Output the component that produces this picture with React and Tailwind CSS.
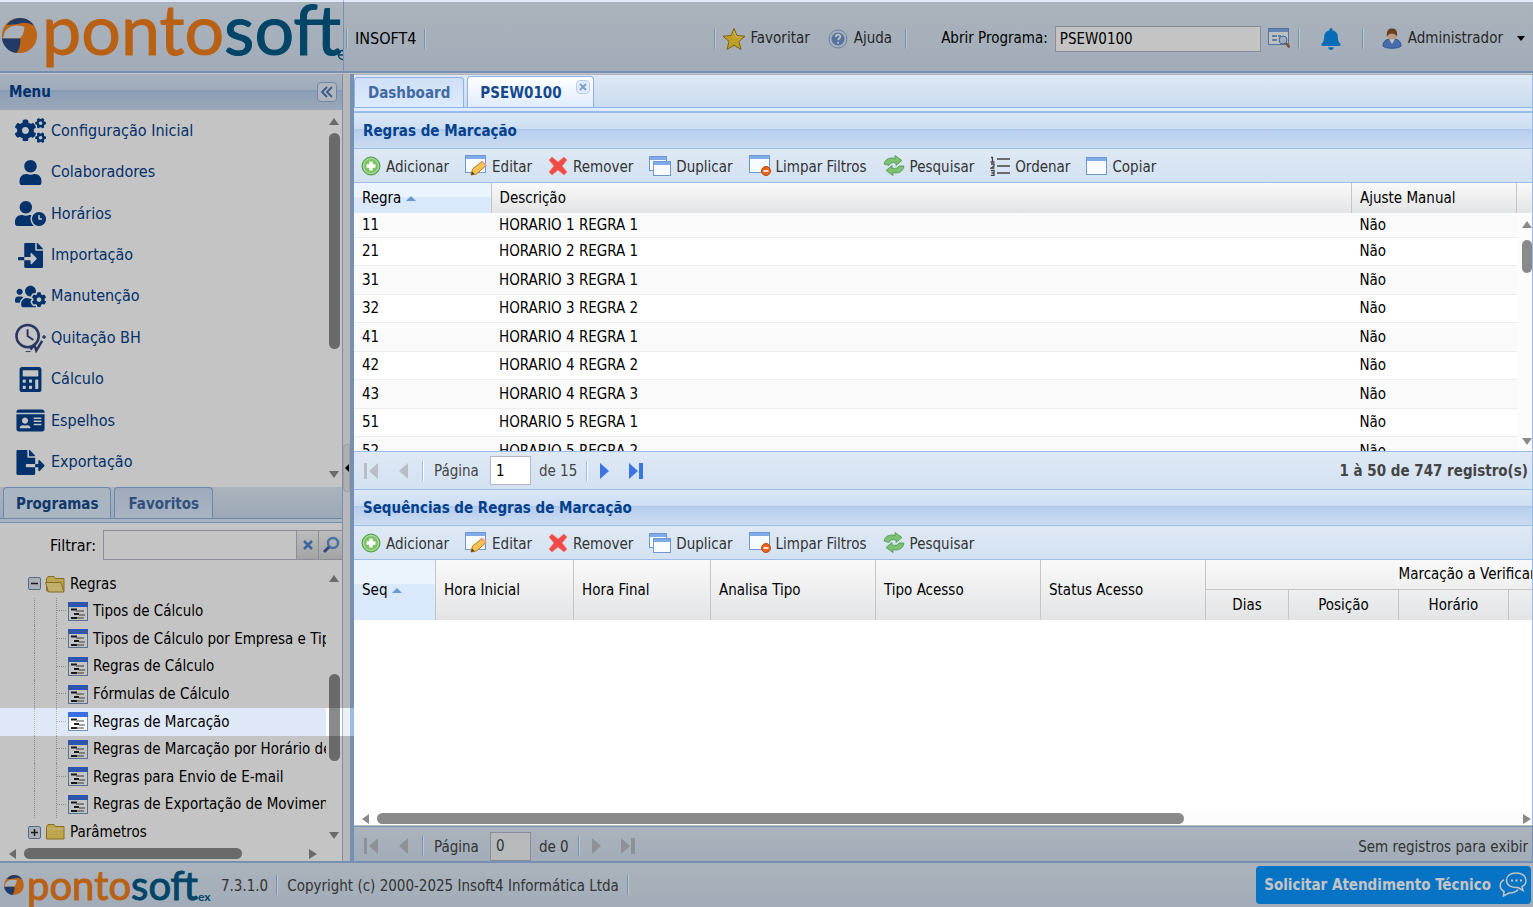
import { FaBell, FaCalculator, FaCogs, FaFileExport, FaFileImport, FaIdCard, FaUser, FaUserClock, FaUsersCog } from 'react-icons/fa'

const menuItems = [
  { label: 'Configuração Inicial', Icon: FaCogs },
  { label: 'Colaboradores', Icon: FaUser },
  { label: 'Horários', Icon: FaUserClock },
  { label: 'Importação', Icon: FaFileImport },
  { label: 'Manutenção', Icon: FaUsersCog },
  { label: 'Quitação BH', Icon: BankClockIcon },
  { label: 'Cálculo', Icon: FaCalculator },
  { label: 'Espelhos', Icon: FaIdCard },
  { label: 'Exportação', Icon: FaFileExport },
]

const programs = [
  'Tipos de Cálculo',
  'Tipos de Cálculo por Empresa e Tipo',
  'Regras de Cálculo',
  'Fórmulas de Cálculo',
  'Regras de Marcação',
  'Regras de Marcação por Horário de Trabalho',
  'Regras para Envio de E-mail',
  'Regras de Exportação de Movimentos',
]

const rules = [
  ['11', 'HORARIO 1 REGRA 1'],
  ['21', 'HORARIO 2 REGRA 1'],
  ['31', 'HORARIO 3 REGRA 1'],
  ['32', 'HORARIO 3 REGRA 2'],
  ['41', 'HORARIO 4 REGRA 1'],
  ['42', 'HORARIO 4 REGRA 2'],
  ['43', 'HORARIO 4 REGRA 3'],
  ['51', 'HORARIO 5 REGRA 1'],
  ['52', 'HORARIO 5 REGRA 2'],
]

const baseActions = [
  { label: 'Adicionar', Icon: AddIcon },
  { label: 'Editar', Icon: EditIcon },
  { label: 'Remover', Icon: RemoveIcon },
  { label: 'Duplicar', Icon: DuplicateIcon },
  { label: 'Limpar Filtros', Icon: ClearIcon },
  { label: 'Pesquisar', Icon: RefreshIcon },
]

const ruleActions = [
  ...baseActions,
  { label: 'Ordenar', Icon: SortIcon },
  { label: 'Copiar', Icon: WindowIcon },
]

/* ---------- icons ---------- */

function BankClockIcon({ className }) {
  return (
    <svg viewBox="0 0 32 32" className={className} fill="none" stroke="#35477f">
      <circle cx="13" cy="14" r="11.5" strokeWidth="2.6" />
      <path d="M13 7v7l6 4" strokeWidth="2" />
      <path d="M16 28l4-5 2 6 6-10" strokeWidth="2.6" />
      <path d="M30 13v4M28 15h4" strokeWidth="1.4" />
      <path d="M11 30h5" strokeWidth="1" />
    </svg>
  )
}

function Frame({ x = 0, y = 0, w = 21, h = 18 }) {
  return (
    <g>
      <rect x={x + 0.5} y={y + 0.5} width={w - 1} height={h - 1} fill="#f8fbff" stroke="#7197cf" />
      <rect x={x + 1} y={y + 1} width={w - 2} height="3" fill="#7fabe8" />
    </g>
  )
}

function AddIcon() {
  return (
    <svg viewBox="0 0 20 20" className="size-5">
      <circle cx="10" cy="10" r="9" fill="#7cc266" stroke="#4f9d46" />
      <circle cx="10" cy="10" r="7.5" fill="none" stroke="#b5e0a6" />
      <path d="M10 5.500v9M5.500 10h9" stroke="#fff" strokeWidth="3.4" />
    </svg>
  )
}

function EditIcon() {
  return (
    <svg viewBox="0 0 22 21" className="h-[21px] w-[22px]">
      <Frame />
      <path d="M6 20l1.500-6L17 6.500l4 4L11.500 19z" fill="#f6c254" stroke="#b87a1d" />
      <path d="M17 6.500l4 4" stroke="#f0a090" strokeWidth="2" />
      <path d="M6 20l1-3.500 2.500 2.500z" fill="#4a3a20" />
    </svg>
  )
}

function RemoveIcon() {
  return (
    <svg viewBox="0 0 20 20" className="size-5">
      <path d="M1 4l3-3 6 5 6-5 3 3-5 6 5 6-3 3-6-5-6 5-3-3 5-6z" fill="#f04a47" stroke="#f77d78" strokeWidth=".8" />
    </svg>
  )
}

function DuplicateIcon() {
  return (
    <svg viewBox="0 0 22 20" className="h-5 w-[22px]">
      <Frame w={18} h={15} />
      <Frame x={4} y={5} w={18} h={15} />
    </svg>
  )
}

function ClearIcon() {
  return (
    <svg viewBox="0 0 22 21" className="h-[21px] w-[22px]">
      <Frame />
      <circle cx="17" cy="16" r="4.500" fill="#e8641b" stroke="#b84a10" />
      <path d="M14.500 16h5" stroke="#fff" strokeWidth="1.600" />
    </svg>
  )
}

function RefreshIcon() {
  return (
    <svg viewBox="0 0 22 21" className="h-[21px] w-[22px]" fill="#7cc074" stroke="#4b9648" strokeWidth=".8">
      <path d="M1 9C2 4 7 2 12 3.500V.500l7 5-6 5V8C9 7 7 8 6 10.500z" />
      <path d="M21 11c-1 6-6 8-11 6.500v3l-7-5 6-5V13c4 1 6 0 7-2z" />
    </svg>
  )
}

function SortIcon() {
  return (
    <svg viewBox="0 0 20 20" className="size-5" fill="none" stroke="#444">
      <path d="M7 3h13M7 10h13M7 17h13" strokeWidth="1.500" />
      <path d="M1 1.500h1.500V6M.500 6h4M1 8h3v2L1 12h3.500M1 14.500h3v5H.800M1.500 17H4" strokeWidth="1.300" />
    </svg>
  )
}

function WindowIcon() {
  return (
    <svg viewBox="0 0 21 18" className="h-[18px] w-[21px]">
      <Frame />
    </svg>
  )
}

function StarIcon() {
  return (
    <svg viewBox="0 0 24 24" className="size-6">
      <path d="M12 1.500l3 7 8 .700-6 5.300 2 8-7-4.300-7 4.300 2-8L1 9.200l8-.700z" fill="#f7cf35" stroke="#ad7d12" strokeLinejoin="round" />
      <path d="M12 4.500l2 5.200 5 .600" fill="none" stroke="#fff0a0" />
    </svg>
  )
}

function HelpIcon() {
  return (
    <svg viewBox="0 0 20 20" className="size-5">
      <circle cx="10" cy="10" r="9" fill="#dbe6f5" stroke="#8aa7d3" />
      <circle cx="10" cy="10" r="6.500" fill="#6f96cf" />
      <path d="M7.800 8c0-3 4.600-3 4.600-.300 0 1.500-2.300 1.600-2.300 3.500M10 13v1.600" fill="none" stroke="#fff" strokeWidth="1.700" />
    </svg>
  )
}

function LookupIcon() {
  return (
    <svg viewBox="0 0 22 21" className="h-[21px] w-[22px]">
      <Frame h={17} />
      <path d="M4 8h5M4 12h5M10 8h3" stroke="#5f89c4" strokeWidth="1.500" />
      <circle cx="15" cy="12" r="4" fill="#cfe2fa" stroke="#5c84be" />
      <path d="M18 15l3.500 4.500" stroke="#a56f3d" strokeWidth="2.500" />
    </svg>
  )
}

function AdminIcon() {
  return (
    <svg viewBox="0 0 20 21" className="h-[21px] w-5">
      <path d="M1 18c0-5 3-7 9-7s9 2 9 7c-3 3-15 3-18 0z" fill="#5b8fe0" stroke="#3e6bb8" />
      <path d="M7 11l3 5 3-5z" fill="#fff" />
      <circle cx="10" cy="7" r="4.500" fill="#f2c9a0" />
      <path d="M5 9C4 2 7 .500 10 .500S16 2 15 9c-1-3-3-3.500-5-3.500S6 6 5 9z" fill="#8a5228" />
    </svg>
  )
}

function FolderIcon({ open }) {
  return (
    <svg viewBox="0 0 21 18" className="h-[18px] w-[21px] shrink-0">
      <path d="M1.500 16V3.500L3 1.500h6l1.500 2H19V16z" fill="#f5d765" stroke="#b08d2c" />
      {open ? (
        <path d="M.500 7.500h15.500L19 17H3.500z" fill="#fbe68c" stroke="#b08d2c" />
      ) : (
        <path d="M2 6h16.500" stroke="#fff2b4" />
      )}
    </svg>
  )
}

function ProgramIcon() {
  return (
    <svg viewBox="0 0 20 19" className="h-[19px] w-5 shrink-0">
      <rect x=".5" y=".5" width="19" height="18" fill="#fff" stroke="#7690b8" />
      <path d="M0 2.500h20" stroke="#3b6fe0" strokeWidth="5" />
      <path d="M3 7.500h6M6 12h5M3 16h6" stroke="#222" strokeWidth="1.800" />
      <path d="M8 9h8M11 13h6M9 16h7" stroke="#888" strokeWidth="1.500" />
    </svg>
  )
}

function Toggle({ open }) {
  return (
    <svg viewBox="0 0 13 13" className="size-[13px] shrink-0">
      <rect x=".5" y=".5" width="12" height="12" rx="1.500" fill="#dde5f0" stroke="#6f87ab" />
      <path d={open ? 'M3 6.500h7' : 'M3 6.500h7M6.500 3v7'} stroke="#222" strokeWidth="1.500" />
    </svg>
  )
}

function PageArrow({ kind, off }) {
  const paths = {
    first: 'M1 1h3v16H1zM15 1v16L6 9z',
    prev: 'M13 1v16L4 9z',
    next: 'M4 1v16l9-8z',
    last: 'M1 1v16l9-8zM11 1h4v16h-4z',
  }
  return (
    <svg viewBox="0 0 16 18" className="h-[18px] w-4">
      <path d={paths[kind]} fill={off ? '#b9bdc4' : '#3c74e6'} />
    </svg>
  )
}

function Caret({ dir, className = '' }) {
  const points = { up: '5,1 10,8 0,8', down: '0,1 10,1 5,8', left: '7,0 7,10 0,5', right: '1,0 9,5 1,10' }
  return (
    <svg viewBox="0 0 10 10" className={`size-[10px] shrink-0 ${className}`}>
      <polygon points={points[dir]} fill="#8a8a8a" />
    </svg>
  )
}

function Globe({ className }) {
  return (
    <svg viewBox="0 0 40 40" className={className}>
      <circle cx="20" cy="20" r="18" fill="#f58220" />
      <path d="M7 9C14-1 29 0 35 10c-5-3-11-4-16-2-4 1-7 1-12 1z" fill="#2b4d88" />
      <path d="M5 16C10 9 18 9 25 11c0 5-2 10-5 12H3z" fill="#dce5f0" />
      <path d="M2 23h19c0 6-1 11-4 15C9 37 3 31 2 23z" fill="#2b4d88" />
    </svg>
  )
}

/* ---------- shared pieces ---------- */

function Divider() {
  return <span className="h-5 w-[2px] border-l border-[#98c0f4] bg-white" />
}

function PanelTitle({ children }) {
  return (
    <h2 className="h-9 shrink-0 border-b border-[#99bce8] bg-[linear-gradient(#dae7f6,#cddef3_45%,#abc7ec_46%,#b8cfee_52%,#cbdbef)] px-[9px] text-[15px] leading-[37px] font-bold text-[#04408c]">
      {children}
    </h2>
  )
}

function Toolbar({ actions }) {
  return (
    <div className="flex h-[34px] shrink-0 items-center gap-4 border-b border-[#99bce8] bg-linear-to-b from-[#dfe9f5] to-[#d3e1f1] px-[7px]">
      {actions.map(({ label, Icon }) => (
        <button key={label} type="button" className="flex items-center gap-[5px] whitespace-nowrap text-[#333]">
          <Icon />
          <span className="pt-[3px]">{label}</span>
        </button>
      ))}
    </div>
  )
}

function Pager({ id, page, total, summary, disabled }) {
  return (
    <div className={`flex shrink-0 items-center border-[#99bce8] bg-linear-to-b from-[#dfe9f5] to-[#d3e1f1] pr-1 pl-[9px] text-[#444] ${disabled ? 'h-[35px] border-t pt-1' : 'h-[39px] border-y'}`}>
      <div className="flex items-center gap-4">
        <button type="button" aria-label="Primeira página"><PageArrow kind="first" off /></button>
        <button type="button" aria-label="Página anterior"><PageArrow kind="prev" off /></button>
      </div>
      <div className="ml-[11px] flex items-center gap-[10px]">
        <Divider />
        <label htmlFor={id} className="pt-[2px]">Página</label>
      </div>
      <input
        id={id}
        defaultValue={page}
        disabled={disabled}
        className={`mx-2 ml-[11px] h-[29px] w-[41px] border border-[#b5b8c8] px-[5px] ${disabled ? 'bg-[#eff2f4] text-[#444]' : 'bg-white text-black'}`}
      />
      <span className="pt-[2px]">de {total}</span>
      <div className="ml-[9px] flex items-center gap-4">
        <Divider />
        <button type="button" aria-label="Próxima página" className="-ml-2"><PageArrow kind="next" off={disabled} /></button>
        <button type="button" aria-label="Última página"><PageArrow kind="last" off={disabled} /></button>
      </div>
      <span className={`ml-auto pt-[2px] ${disabled ? '' : 'font-bold'}`}>{summary}</span>
    </div>
  )
}

function SortMark() {
  return (
    <svg viewBox="0 0 10 5" className="ml-[5px] inline-block h-[5px] w-[10px] align-middle">
      <polygon points="5,0 10,5 0,5" fill="#6b97d3" />
    </svg>
  )
}

/* ---------- page sections ---------- */

function Header() {
  return (
    <header className="flex h-[73px] shrink-0 border-b-2 border-[#99bce8] bg-linear-to-b from-[#dfe9f5] to-[#d3e1f1]">
      <div className="relative flex w-[344px] shrink-0 items-start overflow-hidden border-r border-[#99bce8]">
        <Globe className="mt-4 size-[39px] shrink-0" />
        <span className="ml-[3px] font-['Lato'] text-[70px] leading-[56px] text-[#f07f1c] [-webkit-text-stroke:1px]">
          ponto<span className="text-[#005a87]">soft</span>
        </span>
        <svg viewBox="0 0 8 16" className="absolute right-0 bottom-2 h-4 w-[6px]" fill="none" stroke="#005a87" strokeWidth="2">
          <path d="M8 2C3 2 2 5 2 8s2 6 6 6M2 8h6" />
        </svg>
      </div>
      <div className="flex flex-1 items-center overflow-hidden pt-[6px] pr-2 pl-[2px] whitespace-nowrap">
        <Divider />
        <span className="mr-2 ml-[7px] text-base text-black">INSOFT4</span>
        <Divider />
        <div className="ml-auto flex items-center">
          <Divider />
          <button type="button" className="ml-[6px] flex items-center gap-1 text-[#333]"><StarIcon />Favoritar</button>
          <button type="button" className="ml-[18px] flex items-center gap-[6px] text-[#333]"><HelpIcon />Ajuda</button>
          <span className="mr-[34px] ml-[13px] flex"><Divider /></span>
          <label htmlFor="program">Abrir Programa:</label>
          <input id="program" defaultValue="PSEW0100" className="mr-[7px] ml-[7px] h-[26px] w-[206px] border border-[#b5b8c8] bg-white px-1" />
          <button type="button" aria-label="Localizar programa" className="mr-2"><LookupIcon /></button>
          <Divider />
          <button type="button" aria-label="Notificações" className="mx-5 text-[#0a8cf0]"><FaBell className="size-[22px]" /></button>
          <Divider />
          <button type="button" className="ml-[18px] flex items-center gap-[6px] text-[#333]">
            <AdminIcon />
            Administrador
            <svg viewBox="0 0 8 5" className="ml-2 h-[5px] w-2"><path d="M0 0h8L4 5z" /></svg>
          </button>
        </div>
      </div>
    </header>
  )
}

function MenuPanel() {
  return (
    <section className="flex h-[413px] shrink-0 flex-col">
      <h2 className="flex h-9 shrink-0 items-center justify-between bg-[linear-gradient(#dae7f6,#cddef3_45%,#abc7ec_46%,#b8cfee_52%,#cbdbef)] pr-[5px] pl-[9px] text-[15px] font-bold text-[#04408c]">
        Menu
        <button type="button" aria-label="Recolher menu" className="flex size-5 items-center justify-center rounded-sm border border-[#8fb0dc] bg-[#e4edf8]">
          <svg viewBox="0 0 12 12" className="size-3" fill="none" stroke="#4c76b0" strokeWidth="1.800"><path d="M6 1L1 6l5 5M11 1L6 6l5 5" /></svg>
        </button>
      </h2>
      <div className="flex flex-1">
        <ul className="flex h-[373px] flex-1 flex-col">
          {menuItems.map(({ label, Icon }) => (
            <li key={label} className="flex flex-1">
              <a href="#" className="flex items-center gap-[5px] pl-[15px] text-base whitespace-nowrap text-[#04408c]">
                <Icon className={label === 'Quitação BH' ? 'h-8 w-[31px]' : 'h-[25px] w-[31px]'} />
                {label}
              </a>
            </li>
          ))}
        </ul>
        <div className="flex w-4 flex-col items-center py-[7px]">
          <Caret dir="up" />
          <span className="mt-[6px] h-[216px] w-[11px] rounded-full bg-[#8a8a8a]" />
          <Caret dir="down" className="mt-auto" />
        </div>
      </div>
    </section>
  )
}

function TreeRow({ children }) {
  return <li className="flex min-h-0 flex-1 items-center whitespace-nowrap">{children}</li>
}

function ProgramTree() {
  return (
    <section className="flex min-h-0 flex-1 flex-col">
      <div className="flex h-8 shrink-0 items-end gap-[3px] border-b border-[#8db2e3] bg-linear-to-b from-[#dfe9f5] to-[#cbdbef] px-[3px] text-[15px] font-bold">
        <button type="button" className="h-[31px] rounded-t border border-b-0 border-[#8db2e3] bg-[#deecfd] px-3 pt-[2px] text-[#15498b]">Programas</button>
        <button type="button" className="h-[31px] rounded-t border border-b-0 border-[#8db2e3] bg-linear-to-b from-[#cfdff5] to-[#dcebfd] px-[13px] pt-[2px] text-[#416aa3]">Favoritos</button>
      </div>
      <div className="h-1 shrink-0 border-b border-[#99bce8] bg-[#deecfd]" />
      <div className="flex shrink-0 items-center pt-[7px]">
        <label htmlFor="filter" className="w-[103px] pt-[2px] pr-[7px] text-right text-base">Filtrar:</label>
        <input id="filter" className="h-[30px] min-w-0 flex-1 border border-[#b5b8c8] bg-white px-1" />
        <button type="button" aria-label="Limpar" className="flex h-[30px] w-[22px] items-center justify-center border border-l-0 border-[#b5b8c8] bg-linear-to-b from-[#f5f5f5] to-[#d5d5d5]">
          <svg viewBox="0 0 10 10" className="size-[10px]" stroke="#4a86cf" strokeWidth="2.500"><path d="M1 1l8 8M9 1L1 9" /></svg>
        </button>
        <button type="button" aria-label="Filtrar programas" className="flex h-[30px] w-[23px] items-center justify-center border-y border-[#b5b8c8] bg-linear-to-b from-[#f5f5f5] to-[#d5d5d5]">
          <svg viewBox="0 0 18 18" className="size-[18px]" fill="none"><circle cx="11" cy="7" r="5" stroke="#5b93d8" strokeWidth="2.500" /><path d="M7 11l-5 5" stroke="#3a5fa8" strokeWidth="3" /></svg>
        </button>
      </div>
      <div className="flex min-h-0 flex-1 pt-[10px]">
        <ul className="flex h-[276px] min-w-0 flex-1 flex-col overflow-hidden text-black">
          <TreeRow>
            <span className="mr-1 ml-7 flex"><Toggle open /></span>
            <FolderIcon open />
            <span className="ml-1">Regras</span>
          </TreeRow>
          {programs.map((name) => (
            <TreeRow key={name}>
              <a
                href="#"
                className={`flex h-full min-w-0 flex-1 items-center overflow-hidden pl-[34px] ${name === 'Regras de Marcação' ? 'bg-[#dfe8f6]' : ''}`}
              >
                <span className="h-full w-[22px] shrink-0 border-l border-dotted border-[#b4b4b4]" />
                <span className="mr-[2px] h-full w-[10px] shrink-0 border-l border-dotted border-[#b4b4b4]">
                  <span className="block h-1/2 border-b border-dotted border-[#b4b4b4]" />
                </span>
                <ProgramIcon />
                <span className="ml-[5px]">{name}</span>
              </a>
            </TreeRow>
          ))}
          <TreeRow>
            <span className="mr-1 ml-7 flex"><Toggle /></span>
            <FolderIcon />
            <span className="ml-1">Parâmetros</span>
          </TreeRow>
        </ul>
        <div className="flex h-[271px] w-4 shrink-0 flex-col items-center pt-1">
          <Caret dir="up" />
          <span className="mt-[90px] h-[87px] w-[11px] rounded-full bg-[#8a8a8a]" />
          <Caret dir="down" className="mt-auto" />
        </div>
      </div>
      <div className="flex h-[15px] shrink-0 items-center pr-6 pl-[9px]">
        <Caret dir="left" />
        <span className="ml-[5px] h-[11px] w-[218px] rounded-full bg-[#8a8a8a]" />
        <Caret dir="right" className="ml-auto" />
      </div>
    </section>
  )
}

function RulesGrid() {
  return (
    <section className="flex shrink-0 flex-col">
      <PanelTitle>Regras de Marcação</PanelTitle>
      <Toolbar actions={ruleActions} />
      <div className="flex h-[268px] overflow-hidden">
        <table className="h-fit min-w-0 flex-1 table-fixed border-collapse text-left text-black">
          <colgroup>
            <col className="w-[137px]" />
            <col />
            <col className="w-[165px]" />
          </colgroup>
          <thead>
            <tr className="h-[30px] bg-linear-to-b from-[#f9f9f9] to-[#e3e4e6]">
              <th className="border-r border-[#c5c5c5] bg-[linear-gradient(#ebf3fd_45%,#d9e8fb_46%)] px-2 font-normal">Regra<SortMark /></th>
              <th className="border-r border-[#c5c5c5] px-2 font-normal">Descrição</th>
              <th className="border-r border-[#c5c5c5] px-2 font-normal">Ajuste Manual</th>
            </tr>
          </thead>
          <tbody>
            {rules.map(([rule, description]) => (
              <tr key={rule} className="h-[29px] border-b border-[#ededed] odd:bg-[#fafafa] even:h-7 first:h-6">
                <td className="px-2 leading-5">{rule}</td>
                <td className="px-2 leading-5">{description}</td>
                <td className="px-2 leading-5">Não</td>
              </tr>
            ))}
          </tbody>
        </table>
        <div className="flex w-[15px] shrink-0 flex-col">
          <span className="h-[30px] bg-linear-to-b from-[#f9f9f9] to-[#e3e4e6]" />
          <div className="flex flex-1 flex-col items-end bg-[#fcfcfc] pt-[7px] pb-1">
            <Caret dir="up" />
            <span className="mt-[10px] h-[33px] w-[10px] rounded-full bg-[#8a8a8a]" />
            <Caret dir="down" className="mt-auto" />
          </div>
        </div>
      </div>
      <Pager id="rules-page" page="1" total="15" summary="1 à 50 de 747 registro(s)" />
    </section>
  )
}

function SequencesGrid() {
  const cell = 'border-r border-[#c5c5c5] px-2 font-normal'
  return (
    <section className="flex min-h-0 flex-1 flex-col">
      <PanelTitle>Sequências de Regras de Marcação</PanelTitle>
      <Toolbar actions={baseActions} />
      <div className="min-h-0 flex-1 overflow-hidden bg-white">
        <table className="w-[1375px] table-fixed border-separate border-spacing-0 bg-linear-to-b from-[#f9f9f9] to-[#e3e4e6] text-left text-black">
          <colgroup>
            <col className="w-[82px]" />
            <col className="w-[138px]" />
            <col className="w-[137px]" />
            <col className="w-[165px]" />
            <col className="w-[165px]" />
            <col className="w-[165px]" />
            <col className="w-[83px]" />
            <col className="w-[110px]" />
            <col className="w-[110px]" />
            <col className="w-[110px]" />
            <col className="w-[110px]" />
          </colgroup>
          <thead>
            <tr className="h-[30px]">
              <th rowSpan={2} className={`${cell} bg-[linear-gradient(#ebf3fd_40%,#d9e8fb_41%)]`}>Seq<SortMark /></th>
              <th rowSpan={2} className={cell}>Hora Inicial</th>
              <th rowSpan={2} className={cell}>Hora Final</th>
              <th rowSpan={2} className={cell}>Analisa Tipo</th>
              <th rowSpan={2} className={cell}>Tipo Acesso</th>
              <th rowSpan={2} className={cell}>Status Acesso</th>
              <th colSpan={5} className={`${cell} border-b text-center`}>Marcação a Verificar</th>
            </tr>
            <tr className="h-[30px]">
              <th className={`${cell} text-center`}>Dias</th>
              <th className={`${cell} text-center`}>Posição</th>
              <th className={`${cell} text-center`}>Horário</th>
              <th className={cell} />
              <th className={cell} />
            </tr>
          </thead>
        </table>
      </div>
      <div className="flex h-[15px] shrink-0 items-center bg-[#fcfcfc] pl-2">
        <Caret dir="left" />
        <span className="ml-[5px] h-[11px] w-[69%] rounded-full bg-[#8a8a8a]" />
        <Caret dir="right" className="ml-auto" />
      </div>
      <Pager id="sequences-page" page="0" total="0" summary="Sem registros para exibir" disabled />
    </section>
  )
}

function Workspace() {
  return (
    <main className="flex min-w-0 flex-1 flex-col overflow-hidden border-r border-l-4 border-[#99bce8] bg-white">
      <div className="flex h-[34px] shrink-0 items-end gap-[3px] border-b border-[#8db2e3] bg-linear-to-b from-[#dfe9f5] to-[#cbdbef] text-[15px] font-bold">
        <button type="button" className="h-[30px] rounded-t border border-b-0 border-[#8db2e3] bg-linear-to-b from-[#cfdff5] to-[#dcebfd] px-[13px] pt-[2px] text-[#416aa3]">Dashboard</button>
        <div className="flex h-[31px] items-start rounded-t border border-b-0 border-[#8db2e3] bg-linear-to-b from-white to-[#deecfd] pr-[3px] pl-3 text-[#15498b]">
          <button type="button" className="self-center pt-[2px]">PSEW0100</button>
          <button type="button" aria-label="Fechar aba" className="mt-[3px] ml-[14px] flex size-[14px] items-center justify-center rounded-sm border border-[#b9cfee] bg-[#e3edfa]">
            <svg viewBox="0 0 8 8" className="size-2" stroke="#7f9fcb" strokeWidth="2"><path d="M1 1l6 6M7 1L1 7" /></svg>
          </button>
        </div>
      </div>
      <div className="h-[5px] shrink-0 border-b-2 border-[#99bce8] bg-[#deecfd]" />
      <RulesGrid />
      <SequencesGrid />
    </main>
  )
}

function Footer() {
  return (
    <footer className="flex h-[46px] shrink-0 items-center border-t-2 border-[#99bce8] bg-linear-to-b from-[#dfe9f5] to-[#d3e1f1] pr-[2px] text-[#444]">
      <div className="flex w-[212px] shrink-0 items-center whitespace-nowrap">
        <Globe className="ml-[3px] size-[22px] shrink-0" />
        <span className="ml-[2px] font-['Lato'] text-[40px] leading-9 text-[#f07f1c] [-webkit-text-stroke:1px]">
          ponto<span className="text-[#005a87]">soft</span>
        </span>
        <span className="self-end font-['Lato'] text-xs leading-3 font-bold text-[#005a87]">ex</span>
      </div>
      <span className="mr-2 ml-[9px] pt-[2px]">7.3.1.0</span>
      <Divider />
      <span className="mr-2 ml-[9px] pt-[2px]">Copyright (c) 2000-2025 Insoft4 Informática Ltda</span>
      <Divider />
      <button type="button" className="ml-auto flex h-[38px] items-center gap-2 rounded-sm bg-[#0a96ff] pr-1 pl-2 text-[15px] font-bold whitespace-nowrap text-white">
        Solicitar Atendimento Técnico
        <svg viewBox="0 0 28 26" className="h-[26px] w-7" fill="none" stroke="#fff" strokeWidth="1.500">
          <path d="M17 1c6 0 10 3 10 7.500 0 3-1.500 5-4 6l1 4-5-3C12 16 7.500 13 7.500 8.500 7.500 4 11 1 17 1z" />
          <path d="M5 8C0 10 0 17 5 19.500l-.500 4.500L10 21c4 0 7-1 9-3.500" />
          <path d="M12 8.500h2M16.500 8.500h2M21 8.500h2" strokeWidth="2" />
        </svg>
      </button>
    </footer>
  )
}

// Dims everything but the selected program and its window.
function Spotlight() {
  return (
    <div className="pointer-events-none">
      <div className="absolute inset-x-0 top-[2px] h-[73px] bg-black/23" />
      <div className="absolute top-[75px] left-0 h-[633px] w-[354px] bg-black/23" />
      <div className="absolute top-[736px] bottom-[82px] left-0 w-[354px] bg-black/23" />
      <div className="absolute inset-x-0 bottom-0 h-[82px] bg-black/23" />
    </div>
  )
}

export default function App() {
  return (
    <div className="relative flex h-screen flex-col overflow-hidden bg-white font-['DejaVu_Sans_Condensed','Noto_Sans',sans-serif] text-[15px]">
      <Header />
      <div className="flex min-h-0 flex-1 pt-px">
        <aside className="flex w-[343px] shrink-0 flex-col border-r border-[#99bce8] bg-white">
          <MenuPanel />
          <ProgramTree />
        </aside>
        <div className="flex w-[7px] shrink-0 items-center bg-[#f0f0f0]">
          <button type="button" aria-label="Recolher painel" className="flex h-12 w-[7px] items-center justify-center rounded-l border border-[#d0d0d0] bg-[#e6e6e6]">
            <svg viewBox="0 0 4 8" className="h-2 w-1"><path d="M4 0v8L0 4z" /></svg>
          </button>
        </div>
        <Workspace />
      </div>
      <Footer />
      <Spotlight />
    </div>
  )
}
